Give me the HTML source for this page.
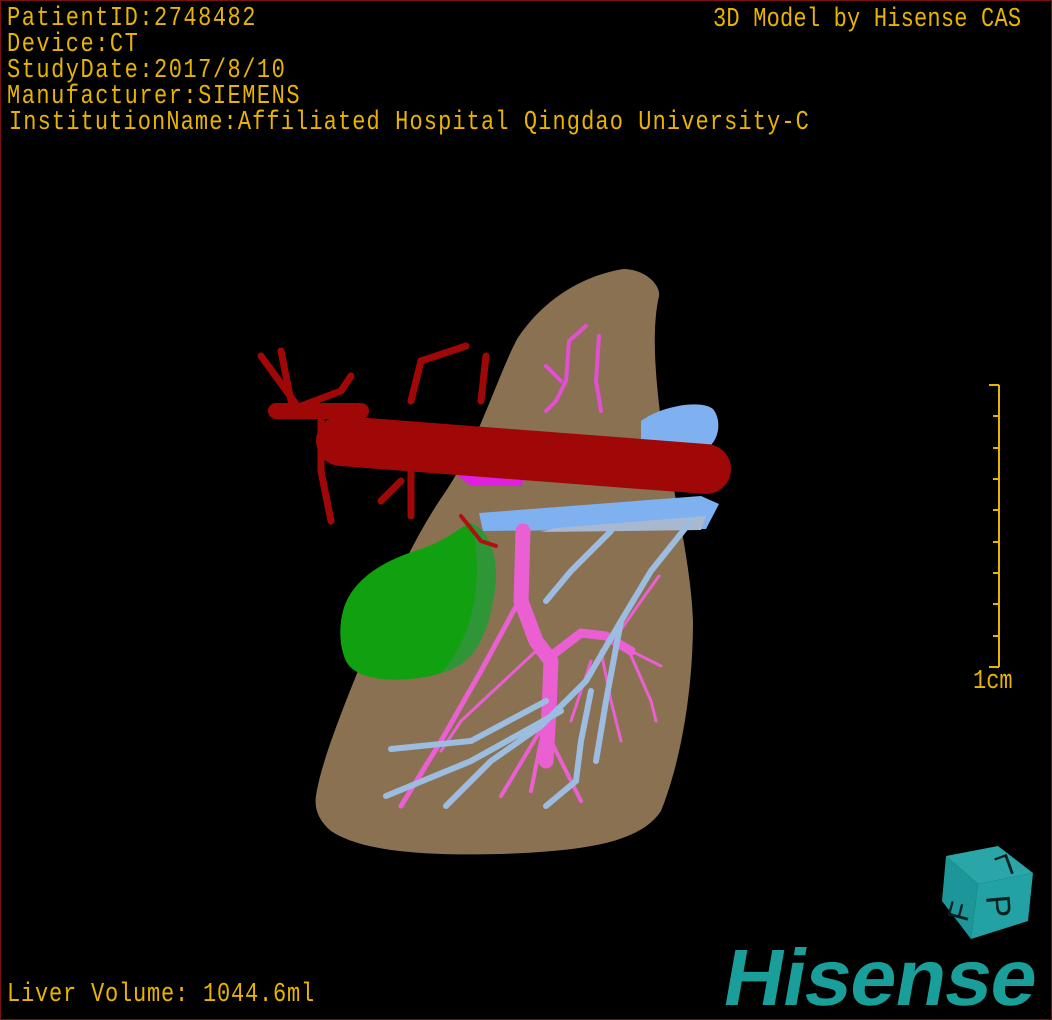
<!DOCTYPE html>
<html><head><meta charset="utf-8"><style>
html,body{margin:0;padding:0;background:#000;}
#f{position:relative;width:1050px;height:1018px;border:1px solid #7a1010;background:#000;overflow:hidden;}
.t{position:absolute;color:#e8b400;font-family:"Liberation Mono",monospace;font-size:22px;letter-spacing:1.5px;white-space:nowrap;line-height:22px;transform:scaleY(1.2);transform-origin:0 0;}
svg{position:absolute;left:0;top:0;}
</style></head><body><div id="f">
<svg width="1050" height="1018" viewBox="0 0 1050 1018">
<path d="M315,795 C320,760 345,700 365,650 C385,600 410,540 445,490 C475,445 495,380 515,340 C540,300 580,275 622,268 C645,268 660,285 658,295 C650,330 655,380 660,420 C670,480 690,560 692,620 C692,690 680,760 660,810 C640,840 590,850 500,853 C420,855 360,850 330,830 C318,820 313,808 315,795 Z" fill="#8a7152"/>
<g stroke="#e050d0" stroke-width="4" fill="none" stroke-linecap="round">
<path d="M585,325 L568,340 L565,380 L555,400 L545,410"/>
<path d="M598,335 L595,380 L600,410"/>
<path d="M545,365 L560,380"/>
</g>
<path d="M342,610 C350,580 380,560 420,548 C445,540 460,525 470,522 C490,530 500,560 492,600 C485,640 470,665 430,675 C395,682 355,680 345,660 C338,645 338,625 342,610 Z" fill="#10a010"/>
<path d="M470,522 C490,530 500,560 492,600 C485,640 470,665 440,672 C470,640 485,580 470,522Z" fill="#2e9636"/>
<path d="M478,512 L700,495 L718,503 L705,528 L482,530 Z" fill="#7fb0f0"/>
<path d="M555,527 L705,515 L700,529 L540,531Z" fill="#a8b8d0"/>
<path d="M640,420 C660,405 700,398 712,408 C722,420 718,445 700,450 L640,440Z" fill="#7fb0f0"/>
<path d="M440,462 L530,465 L520,485 L470,485Z" fill="#e020e0"/>
<g stroke="#ea60d2" fill="none" stroke-linecap="round" stroke-linejoin="round">
<path d="M522,530 L520,600 L535,640 L550,660 L548,710 L545,760" stroke-width="15"/>
<path d="M550,655 L580,632 L605,635 L630,650" stroke-width="9"/>
<path d="M630,650 L660,665 M628,650 L650,700 L655,720 M612,640 L640,600 L658,575" stroke-width="3"/>
<path d="M518,600 L480,670 L440,740 L400,805" stroke-width="5"/>
<path d="M535,650 L460,720 L440,750" stroke-width="3"/>
<path d="M545,720 L515,770 L500,795 M545,730 L570,780 L580,800 M540,740 L530,790" stroke-width="4"/>
<path d="M600,650 L610,700 L620,740 M590,660 L570,720" stroke-width="3"/>
</g>
<g stroke="#9cbce0" fill="none" stroke-linecap="round" stroke-width="6">
<path d="M690,520 L650,570 L620,620 L585,680 L540,725 L490,760 L445,805"/>
<path d="M610,530 L570,570 L545,600"/>
<path d="M545,700 L470,740 L390,748"/>
<path d="M560,710 L470,760 L385,795"/>
<path d="M590,690 L580,740 L575,780 L545,805"/>
<path d="M620,620 L605,700 L595,760"/>
</g>
<g stroke="#a00808" fill="none" stroke-linecap="round">
<path d="M300,410 L260,355 M290,400 L280,350 M300,405 L340,390 L350,375 M320,410 L320,470 L330,520 M410,470 L410,515 M400,480 L380,500 M410,400 L420,360 L465,345 M480,400 L485,355" stroke-width="7"/>
<path d="M275,410 L360,410" stroke-width="16"/>
<path d="M340,440 L705,468" stroke-width="50"/>
<path d="M460,515 L480,540 L495,545" stroke-width="4" stroke="#b01010"/>
</g>
<g stroke="#e8b400" stroke-width="2">
<line x1="998" y1="384" x2="998" y2="666"/>
<line x1="988" y1="384" x2="998" y2="384"/><line x1="992" y1="415" x2="998" y2="415"/><line x1="992" y1="447" x2="998" y2="447"/><line x1="992" y1="478" x2="998" y2="478"/><line x1="992" y1="509" x2="998" y2="509"/><line x1="992" y1="541" x2="998" y2="541"/><line x1="992" y1="572" x2="998" y2="572"/><line x1="992" y1="603" x2="998" y2="603"/><line x1="992" y1="635" x2="998" y2="635"/><line x1="988" y1="666" x2="998" y2="666"/>
</g>
<path d="M945,855 L997,845 L1032,872 L977,883Z" fill="#2aa6a8"/>
<path d="M945,855 L977,883 L970,938 L941,900Z" fill="#1c9698"/>
<path d="M977,883 L1032,872 L1027,920 L970,938Z" fill="#22a2a4"/>
<text x="0" y="0" font-family="Liberation Sans" font-size="30" fill="#062020" transform="translate(1008,852) rotate(160)">L</text>
<text x="0" y="0" font-family="Liberation Sans" font-size="34" fill="#062020" transform="translate(985,895) rotate(85)">P</text>
<text x="0" y="0" font-family="Liberation Sans" font-size="30" fill="#062020" transform="translate(966,922) rotate(-75)">F</text>
</svg>
<div class="t" style="left:6px;top:5px">PatientID:2748482</div>
<div class="t" style="left:6px;top:31px">Device:CT</div>
<div class="t" style="left:6px;top:57px">StudyDate:2017/8/10</div>
<div class="t" style="left:6px;top:83px">Manufacturer:SIEMENS</div>
<div class="t" style="left:8px;top:109px;letter-spacing:1.1px">InstitutionName:Affiliated Hospital Qingdao University-C</div>
<div class="t" style="left:712px;top:6px;letter-spacing:0.2px">3D Model by Hisense CAS</div>
<div class="t" style="left:6px;top:981px;letter-spacing:0.8px">Liver Volume: 1044.6ml</div>
<div class="t" style="left:972px;top:668px;letter-spacing:0">1cm</div>
<div style="position:absolute;left:716px;top:932px;font-family:'Liberation Sans',sans-serif;font-weight:bold;font-size:80px;color:#1a9e9a;letter-spacing:-1px;line-height:90px;transform:skewX(-10deg) scaleX(1.04);transform-origin:0 100%;">Hisense</div>
</div></body></html>
